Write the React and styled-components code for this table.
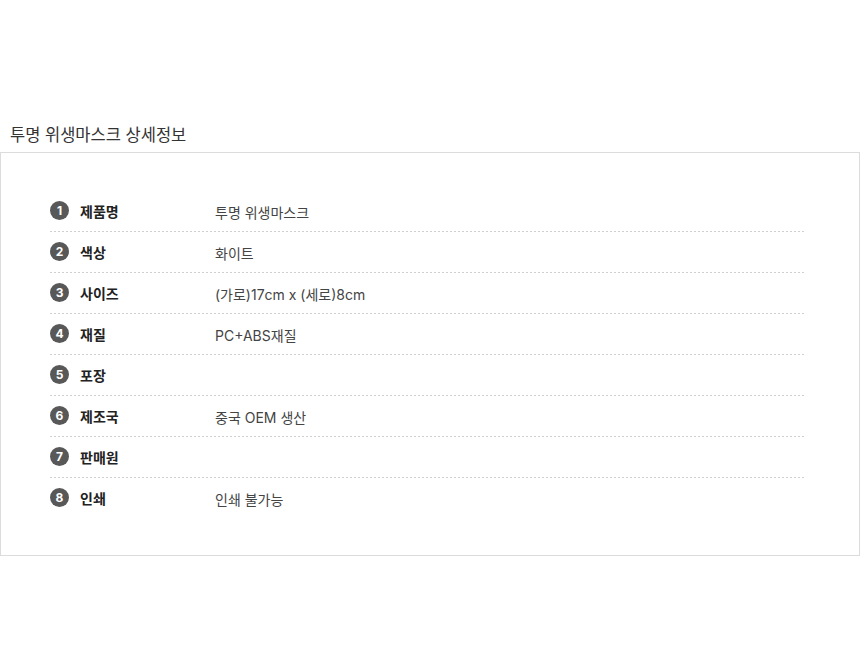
import React from 'react';
import styled, { createGlobalStyle } from 'styled-components';

const GlobalStyle = createGlobalStyle`
  html, body {
    margin: 0;
    padding: 0;
    background: #fff;
    font-family: Inter, "Noto Sans CJK KR", "Noto Sans", sans-serif;
  }
`;

const Page = styled.div`
  width: 860px;
  padding-top: 124px;
`;

const Title = styled.h2`
  margin: 0 0 6px 10px;
  font-size: 16.5px;
  font-weight: 400;
  color: #333;
  line-height: 22px;
`;

const Box = styled.div`
  border: 1px solid #dcdcdc;
  padding: 38px 55px 36px 49px;
`;

const Row = styled.div`
  display: flex;
  align-items: center;
  height: 41px;
  background-image: ${p => p.$last ? 'none' : 'linear-gradient(to right, #cfcfcf 50%, transparent 50%)'};
  background-size: 4px 1px;
  background-repeat: repeat-x;
  background-position: left bottom;
`;

const Num = styled.span`
  width: 19px;
  height: 19px;
  border-radius: 50%;
  background: #585858;
  color: #fff;
  font-size: 12px;
  font-weight: 700;
  display: flex;
  align-items: center;
  justify-content: center;
  flex-shrink: 0;
  margin-top: -2px;
`;

const Label = styled.span`
  width: 135px;
  margin-left: 11px;
  font-size: 14px;
  font-weight: 700;
  color: #222;
  margin-top: -2px;
`;

const Value = styled.span`
  font-size: 14px;
  color: #444;
`;

const rows = [
  ['제품명', '투명 위생마스크'],
  ['색상', '화이트'],
  ['사이즈', '(가로)17cm x (세로)8cm'],
  ['재질', 'PC+ABS재질'],
  ['포장', ''],
  ['제조국', '중국 OEM 생산'],
  ['판매원', ''],
  ['인쇄', '인쇄 불가능'],
];

export default function App() {
  return (
    <Page>
      <GlobalStyle />
      <Title>투명 위생마스크 상세정보</Title>
      <Box>
        {rows.map(([label, value], i) => (
          <Row key={label} $last={i === rows.length - 1}>
            <Num>{i + 1}</Num>
            <Label>{label}</Label>
            <Value>{value}</Value>
          </Row>
        ))}
      </Box>
    </Page>
  );
}
